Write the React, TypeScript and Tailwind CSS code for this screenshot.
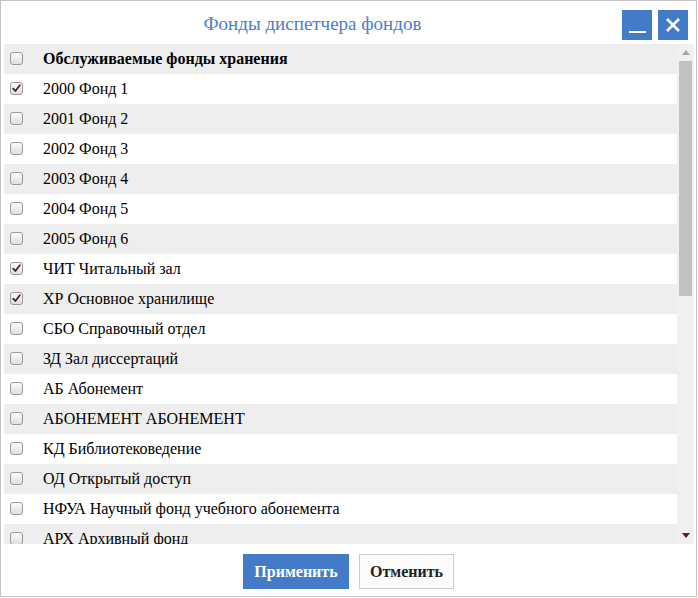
import React from "react";

const rows: { label: string; checked: boolean }[] = [
  { label: "2000 Фонд 1", checked: true },
  { label: "2001 Фонд 2", checked: false },
  { label: "2002 Фонд 3", checked: false },
  { label: "2003 Фонд 4", checked: false },
  { label: "2004 Фонд 5", checked: false },
  { label: "2005 Фонд 6", checked: false },
  { label: "ЧИТ Читальный зал", checked: true },
  { label: "ХР Основное хранилище", checked: true },
  { label: "СБО Справочный отдел", checked: false },
  { label: "ЗД Зал диссертаций", checked: false },
  { label: "АБ Абонемент", checked: false },
  { label: "АБОНЕМЕНТ АБОНЕМЕНТ", checked: false },
  { label: "КД Библиотековедение", checked: false },
  { label: "ОД Открытый доступ", checked: false },
  { label: "НФУА Научный фонд учебного абонемента", checked: false },
  { label: "АРХ Архивный фонд", checked: false },
  { label: "МБА Межбиблиотечный абонемент", checked: false },
];

function Check({ checked }: { checked: boolean }) {
  return (
    <div className="w-[13px] h-[13px] rounded-[3px] border border-[#9a9a9a] bg-gradient-to-b from-[#fcfcfc] to-[#dedede] flex items-center justify-center">
      {checked && (
        <svg width="9" height="9" viewBox="0 0 9 9">
          <path d="M1.2 4.6 L3.4 7 L7.8 1.3" fill="none" stroke="#4a1d44" strokeWidth="1.8" strokeLinecap="round" strokeLinejoin="round" />
        </svg>
      )}
    </div>
  );
}

export default function App() {
  return (
    <div
      className="w-[697px] h-[597px] border border-[#c4c4c4] bg-white flex flex-col"
      style={{ fontFamily: '"Liberation Serif", "Times New Roman", serif' }}
    >
      <div className="h-[42px] flex items-start">
        <div className="flex-1 h-[42px] flex items-center justify-center text-[19px] leading-none text-[#4a7ecb] pl-[2px] pt-[2px]">
          Фонды диспетчера фондов
        </div>
        <div className="flex gap-[6px] mt-[9px] mr-[8px]">
          <div className="w-[30px] h-[30px] bg-[#447bc8] flex items-end justify-center pb-[7px]">
            <div className="w-[17px] h-[2.5px] bg-white" />
          </div>
          <div className="w-[30px] h-[30px] bg-[#447bc8] flex items-center justify-center">
            <svg width="16" height="16" viewBox="0 0 16 16">
              <path d="M2 2 L14 14 M14 2 L2 14" stroke="white" strokeWidth="2.6" />
            </svg>
          </div>
        </div>
      </div>
      <div className="h-[500px] flex ml-[3px] mr-[2px] mt-[1px]">
        <div className="flex-1 overflow-hidden">
          <div className="h-[30px] bg-[#eeeeee] flex items-center">
            <div className="w-[39px] pl-[6px] flex items-center -mt-[2px]">
              <Check checked={false} />
            </div>
            <div className="text-[16px] leading-none font-bold text-black">Обслуживаемые фонды хранения</div>
          </div>
          {rows.map((r, i) => (
            <div
              key={i}
              className={`h-[30px] flex items-center ${i % 2 === 1 ? "bg-[#eeeeee]" : "bg-white"}`}
            >
              <div className="w-[39px] pl-[6px] flex items-center -mt-[2px]">
                <Check checked={r.checked} />
              </div>
              <div className="text-[16px] leading-none text-black">{r.label}</div>
            </div>
          ))}
        </div>
        <div className="w-[17px] bg-[#f0f0f0] flex flex-col">
          <div className="h-[17px] flex items-center justify-center">
            <svg width="8" height="5" viewBox="0 0 8 5">
              <path d="M0 5 L4 0 L8 5 Z" fill="#a7a3ab" />
            </svg>
          </div>
          <div className="mx-[2px] h-[235px] bg-[#c1c1c1]" />
          <div className="flex-1" />
          <div className="h-[17px] flex items-center justify-center">
            <svg width="8" height="5" viewBox="0 0 8 5">
              <path d="M0 0 L8 0 L4 5 Z" fill="#4f1a45" />
            </svg>
          </div>
        </div>
      </div>
      <div className="flex justify-center gap-[10px] pt-[10px]">
        <button className="w-[106px] h-[35px] bg-[#447bc8] text-white font-bold text-[16px] leading-none">
          Применить
        </button>
        <button className="w-[95px] h-[35px] bg-[#fbfbfb] border border-[#cccccc] text-[#222] font-bold text-[16px] leading-none">
          Отменить
        </button>
      </div>
    </div>
  );
}
